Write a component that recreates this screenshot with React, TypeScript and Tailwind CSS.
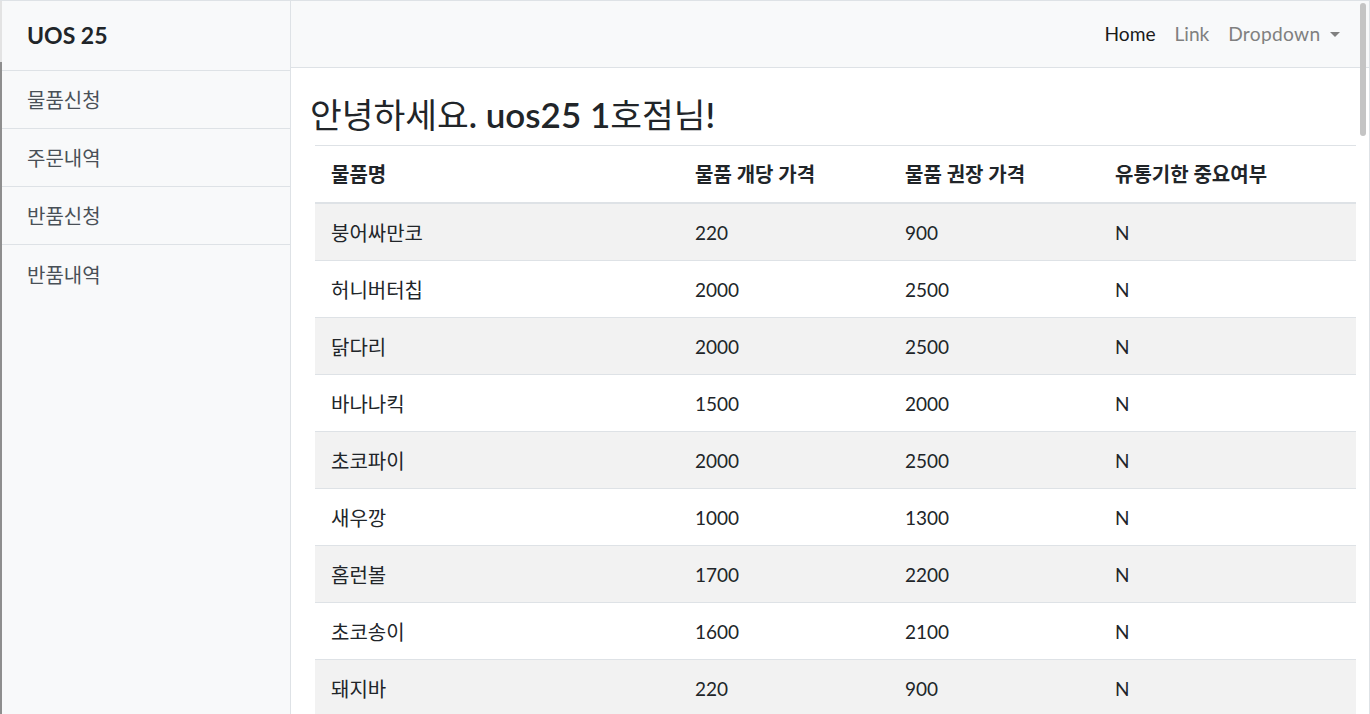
import React from "react";

const rows: [string, string, string, string][] = [
  ["붕어싸만코", "220", "900", "N"],
  ["허니버터칩", "2000", "2500", "N"],
  ["닭다리", "2000", "2500", "N"],
  ["바나나킥", "1500", "2000", "N"],
  ["초코파이", "2000", "2500", "N"],
  ["새우깡", "1000", "1300", "N"],
  ["홈런볼", "1700", "2200", "N"],
  ["초코송이", "1600", "2100", "N"],
  ["돼지바", "220", "900", "N"],
];

const FONT = '"Lato", "Noto Sans CJK KR", sans-serif';

export default function App() {
  return (
    <div
      className="relative flex h-[714px] w-[1370px] overflow-hidden border-t border-r border-[#dee2e6] bg-white text-[#212529]"
      style={{ fontFamily: FONT }}
    >
      {/* left window edge */}
      <div className="flex w-[2px] flex-col">
        <div className="h-[61px] bg-[#e3e3e3]" />
        <div className="flex-1 bg-[#8e8e8e]" />
      </div>

      {/* sidebar */}
      <div className="flex w-[289px] shrink-0 flex-col border-r border-[#dee2e6] bg-[#f8f9fa]">
        <div className="flex h-[70px] items-center border-b border-[#dee2e6] pl-[25px] text-[23px] font-bold text-[#212529]">
          UOS 25
        </div>
        {["물품신청", "주문내역", "반품신청", "반품내역"].map((t, i) => (
          <div
            key={t}
            className={`flex h-[58px] items-center pl-[25px] pt-[1px] text-[20px] text-[#495057] ${
              i < 3 ? "border-b border-[#dee2e6]" : ""
            }`}
          >
            {t}
          </div>
        ))}
      </div>

      {/* main */}
      <div className="flex min-w-0 flex-1 flex-col">
        <div className="flex h-[67px] shrink-0 items-center justify-end border-b border-[#dee2e6] bg-[#f8f9fa] pr-[19px] text-[19.2px]">
          <span className="px-[9.4px] text-[#1a1a1a]">Home</span>
          <span className="px-[9.4px] text-[#808080]">Link</span>
          <span className="flex items-center pl-[9.4px] pr-[9.6px] text-[#808080]">
            <span className="tracking-[0.3px]">Dropdown</span>
            <span className="ml-[10px] mt-[2px] h-0 w-0 border-x-[5.8px] border-t-[5.8px] border-x-transparent border-t-[#808080]" />
          </span>
        </div>

        <div className="pl-[19px] pr-[12px] pt-[26px]">
          <h3 className="mb-[11px] flex h-[40px] items-baseline whitespace-nowrap text-[34.5px] leading-[40px]">
            <span className="font-normal">안녕하세요</span>
            <span className="text-[35px] font-semibold">.&nbsp;uos25 1</span>
            <span className="font-normal">호점님</span>
            <span className="text-[35px] font-semibold">!</span>
          </h3>
          <div className="ml-[5px] w-[1041px] text-[19px]">
            <div className="flex h-[59px] items-center border-t border-b-2 border-[#dee2e6] text-[20px] font-bold">
              <div className="w-[364px] pl-[16px]">물품명</div>
              <div className="w-[210px] pl-[16px]">물품 개당 가격</div>
              <div className="w-[210px] pl-[16px]">물품 권장 가격</div>
              <div className="flex-1 pl-[16px]">유통기한 중요여부</div>
            </div>
            {rows.map((r, i) => (
              <div
                key={i}
                className={`flex h-[57px] items-center border-b border-[#dee2e6] pt-[2px] ${
                  i % 2 === 0 ? "bg-[#f2f2f2]" : "bg-white"
                }`}
              >
                <div className="w-[364px] pl-[16px] text-[20px]">{r[0]}</div>
                <div className="w-[210px] pl-[16px]">{r[1]}</div>
                <div className="w-[210px] pl-[16px]">{r[2]}</div>
                <div className="flex-1 pl-[16px]">{r[3]}</div>
              </div>
            ))}
          </div>
        </div>
      </div>

      {/* overlay scrollbar thumb */}
      <div className="absolute left-[1360px] top-[2px] h-[133px] w-[6px] rounded-full bg-[#c4c4c4]" />
    </div>
  );
}
